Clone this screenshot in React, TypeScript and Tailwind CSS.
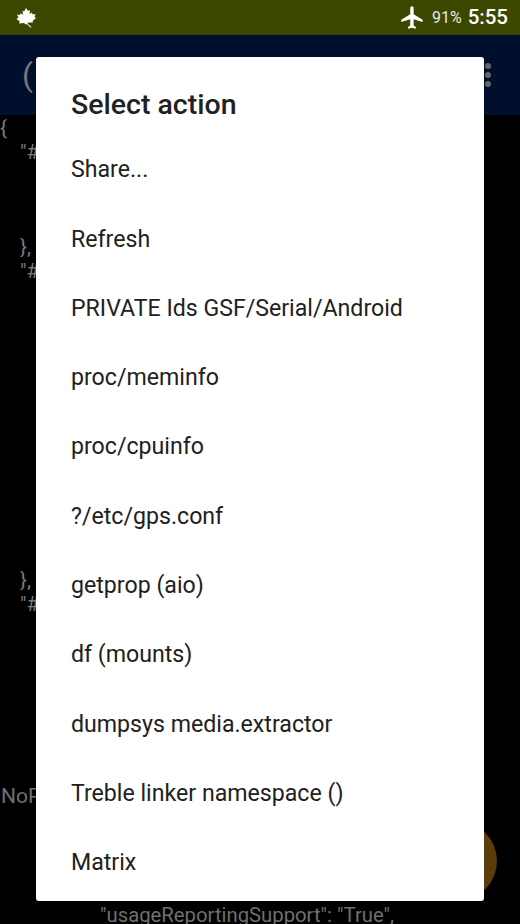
import React from 'react';

const actions = [
  'Share...',
  'Refresh',
  'PRIVATE Ids GSF/Serial/Android',
  'proc/meminfo',
  'proc/cpuinfo',
  '?/etc/gps.conf',
  'getprop (aio)',
  'df (mounts)',
  'dumpsys media.extractor',
  'Treble linker namespace ()',
  'Matrix',
];

const jsonTop = [
  '{',
  '    "#',
  '',
  '',
  '',
  '    },',
  '    "#',
  '',
  '',
  '',
  '',
  '',
  '',
  '',
  '',
  '',
  '',
  '',
  '',
  '    },',
  '    "#',
];

const MapleLeaf = () => (
  <svg viewBox="0 0 20 20" className="w-5 h-5 text-white" fill="currentColor">
    <path d="M10 0L12 3L14 2L13.5 6L16 4.5L16.5 6.5L19.5 6L18.5 9L20 10L16.5 13L17 14.5L12.5 14.5L11.5 15.5L15.5 19L14.8 19.8L10.8 16L9.8 16.5L8 15L3 15.5L3.8 13.5L0.5 11L2.5 9.5L1 6.5L4 7L4.5 5L7 7L6.5 2.5L8 3.5Z" />
  </svg>
);

const Plane = () => (
  <svg viewBox="0 0 24 24" className="w-[27px] h-[27px] text-white" fill="currentColor">
    <path d="M21 16v-2l-8-5V3.5c0-.83-.67-1.5-1.5-1.5S10 2.67 10 3.5V9l-8 5v2l8-2.5V19l-2 1.5V22l3.5-1 3.5 1v-1.5L13 19v-5.5l8 2.5z" />
  </svg>
);

export default function App() {
  return (
    <div className="relative w-[520px] h-[924px] overflow-hidden bg-black font-['Roboto',sans-serif]">
      {/* status bar */}
      <div className="h-[35px] bg-[#3c4800] flex items-center pl-4 pr-3">
        <MapleLeaf />
        <div className="ml-auto flex items-center">
          <Plane />
          <span className="ml-[6px] text-[16px] text-[#e8e8e8]">91%</span>
          <span className="ml-[6px] text-[20.5px] font-medium text-white">5:55</span>
        </div>
      </div>

      {/* app bar */}
      <div className="h-[80px] bg-[#000f2e] flex items-center pl-[22px] pr-[29px]">
        <span className="text-[32px] text-[#777777] leading-none">(</span>
        <div className="ml-auto flex flex-col gap-[3px]">
          <div className="w-[6px] h-[6px] rounded-full bg-[#666666]" />
          <div className="w-[6px] h-[6px] rounded-full bg-[#666666]" />
          <div className="w-[6px] h-[6px] rounded-full bg-[#666666]" />
        </div>
      </div>

      {/* json text behind the dialog */}
      <div className="pt-[2px] text-[20.3px] leading-[23.8px] text-[#7a7a7a] whitespace-pre">
        {jsonTop.map((line, i) => (
          <div key={i} className="h-[23.8px]">{line || ' '}</div>
        ))}
        <div className="mt-[165.5px] pl-[1px] h-[28px] text-[21px] leading-[28px] text-[#6f6f6f]">NoP</div>
        <div className="mt-[96px] pl-[100px] h-[19px] leading-[19px] text-[#6f6f6f]">{'"usageReportingSupport": "True",'}</div>
      </div>

      {/* fab */}
      <div className="absolute left-[417px] top-[821px] w-[80px] h-[80px] rounded-full bg-[#5c3c08]" />

      {/* dialog */}
      <div className="absolute left-[36px] top-[57px] w-[448px] h-[844px] bg-white rounded-[3px] flex flex-col">
        <div className="h-[79px] shrink-0 pl-[35px] pt-[30px] text-[28.5px] leading-[36px] font-medium text-[#212121]">
          Select action
        </div>
        {actions.map((a) => (
          <div key={a} className="h-[69.3px] shrink-0 pl-[35px] flex items-center text-[23.15px] text-[#212121]">
            {a}
          </div>
        ))}
      </div>
    </div>
  );
}
